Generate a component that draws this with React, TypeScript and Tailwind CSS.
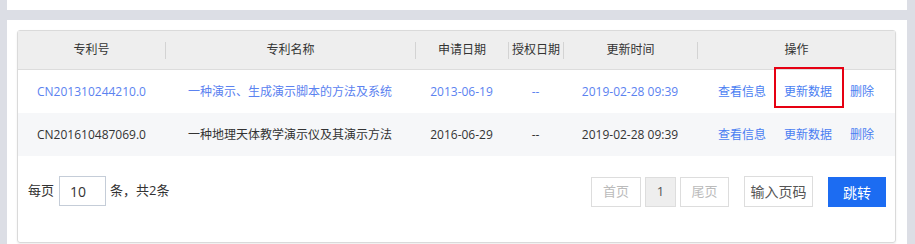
import React from 'react'

const cols = 'grid grid-cols-[147px_250px_93px_55px_134px_198px]'

const headers = ['专利号', '专利名称', '申请日期', '授权日期', '更新时间', '操作']

const rows = [
  {
    no: 'CN201310244210.0',
    name: '一种演示、生成演示脚本的方法及系统',
    apply: '2013-06-19',
    grant: '--',
    updated: '2019-02-28 09:39',
    active: true,
  },
  {
    no: 'CN201610487069.0',
    name: '一种地理天体教学演示仪及其演示方法',
    apply: '2016-06-29',
    grant: '--',
    updated: '2019-02-28 09:39',
    active: false,
  },
]

export default function App() {
  return (
    <div
      className="w-[915px] h-[244px] bg-[#dcdee5] flex flex-col pl-[7px] pr-[8px] overflow-hidden"
      style={{ fontFamily: '"Open Sans", "Noto Sans CJK SC", sans-serif' }}
    >
      <div className="h-[10px] bg-white shrink-0" />
      <div className="h-[10px] shrink-0" />
      <div className="flex-1 bg-white pl-[10px] pr-[11px] pt-[10px]">
        <div className="h-[213px] border border-[#dadada] rounded-[3px] shadow-[0_1px_2px_rgba(0,0,0,0.08)] flex flex-col">
          {/* header */}
          <div className={`${cols} h-[39px] bg-[#eeeeee] border-b border-[#dcdcdc] text-[12px] text-[#333]`}>
            {headers.map((h, i) => (
              <div key={h} className="flex items-center">
                {i > 0 ? <div className="w-px h-[17px] bg-[#d3d3d3]" /> : null}
                <div className="flex-1 text-center">{h}</div>
              </div>
            ))}
          </div>

          {/* rows */}
          {rows.map((r) => (
            <div
              key={r.no}
              className={`${cols} relative h-[43px] text-[12px] ${
                r.active ? 'bg-white text-[#5b82f0]' : 'bg-[#f6f7f9] text-[#333]'
              }`}
            >
              <div className="flex items-center justify-center">{r.no}</div>
              <div className="flex items-center justify-center">{r.name}</div>
              <div className="flex items-center justify-center">{r.apply}</div>
              <div className="flex items-center justify-center">{r.grant}</div>
              <div className="flex items-center justify-center">{r.updated}</div>
              <div className="flex items-center justify-center gap-[18px] text-[#4a7ef2]">
                <span>查看信息</span>
                <span>更新数据</span>
                <span>删除</span>
              </div>
              {r.active ? (
                <div className="absolute left-[756px] top-[-3px] w-[70px] h-[41px] border-2 border-[#e60012] pointer-events-none" />
              ) : null}
            </div>
          ))}

          {/* pagination */}
          <div className="flex-1 flex items-start pt-[20px] pl-[10px] pr-[9px] text-[13px] text-[#333]">
            <div className="flex items-center h-[30px]">
              <span>每页</span>
              <div className="ml-[5px] w-[47px] h-[30px] border border-[#c5cdd8] flex items-center pl-[10px] text-[14px]">
                10
              </div>
              <span className="ml-[4px]">条，共2条</span>
            </div>
            <div className="ml-auto flex items-center">
              <div className="w-[50px] h-[30px] mt-[1px] border border-[#dddddd] flex items-center justify-center text-[#bbbbbb]">
                首页
              </div>
              <div className="ml-[4px] w-[31px] h-[30px] mt-[1px] border border-[#dddddd] bg-[#eeeeee] flex items-center justify-center text-[#555]">
                1
              </div>
              <div className="ml-[4px] w-[49px] h-[30px] mt-[1px] border border-[#dddddd] flex items-center justify-center text-[#bbbbbb]">
                尾页
              </div>
              <div className="ml-[15px] w-[69px] h-[31px] border border-[#dddddd] flex items-center justify-center text-[14px] text-[#555]">
                输入页码
              </div>
              <button className="ml-[15px] w-[58px] h-[30px] mt-[1px] bg-[#1c6cf2] text-white text-[14px] flex items-center justify-center">
                跳转
              </button>
            </div>
          </div>
        </div>
      </div>
    </div>
  )
}
